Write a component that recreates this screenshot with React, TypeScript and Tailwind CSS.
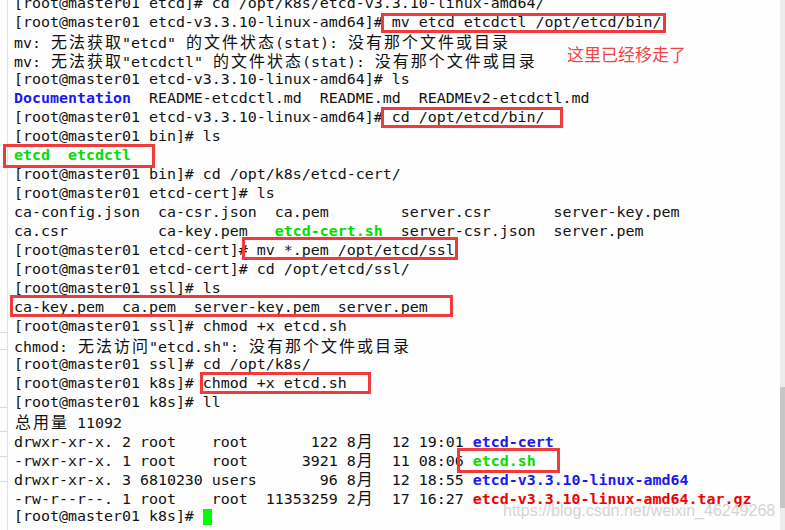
import React from "react";

type Seg = { t: string; c?: "blue" | "green" | "red" };
type Line = Seg[];

const P = (dir: string) => `[root@master01 ${dir}]# `;

const lines: Line[] = [
  [{ t: P("etcd") + "cd /opt/k8s/etcd-v3.3.10-linux-amd64/" }],
  [{ t: P("etcd-v3.3.10-linux-amd64") + "mv etcd etcdctl /opt/etcd/bin/" }],
  [{ t: 'mv: 无法获取"etcd" 的文件状态(stat): 没有那个文件或目录' }],
  [{ t: 'mv: 无法获取"etcdctl" 的文件状态(stat): 没有那个文件或目录' }],
  [{ t: P("etcd-v3.3.10-linux-amd64") + "ls" }],
  [{ t: "Documentation", c: "blue" }, { t: "  README-etcdctl.md  README.md  READMEv2-etcdctl.md" }],
  [{ t: P("etcd-v3.3.10-linux-amd64") + "cd /opt/etcd/bin/" }],
  [{ t: P("bin") + "ls" }],
  [{ t: "etcd", c: "green" }, { t: "  " }, { t: "etcdctl", c: "green" }],
  [{ t: P("bin") + "cd /opt/k8s/etcd-cert/" }],
  [{ t: P("etcd-cert") + "ls" }],
  [{ t: "ca-config.json  ca-csr.json  ca.pem        server.csr       server-key.pem" }],
  [
    { t: "ca.csr          ca-key.pem   " },
    { t: "etcd-cert.sh", c: "green" },
    { t: "  server-csr.json  server.pem" },
  ],
  [{ t: P("etcd-cert") + "mv *.pem /opt/etcd/ssl" }],
  [{ t: P("etcd-cert") + "cd /opt/etcd/ssl/" }],
  [{ t: P("ssl") + "ls" }],
  [{ t: "ca-key.pem  ca.pem  server-key.pem  server.pem" }],
  [{ t: P("ssl") + "chmod +x etcd.sh" }],
  [{ t: 'chmod: 无法访问"etcd.sh": 没有那个文件或目录' }],
  [{ t: P("ssl") + "cd /opt/k8s/" }],
  [{ t: P("k8s") + "chmod +x etcd.sh" }],
  [{ t: P("k8s") + "ll" }],
  [{ t: "总用量 11092" }],
  [{ t: "drwxr-xr-x. 2 root    root       122 8月  12 19:01 " }, { t: "etcd-cert", c: "blue" }],
  [{ t: "-rwxr-xr-x. 1 root    root      3921 8月  11 08:06 " }, { t: "etcd.sh", c: "green" }],
  [{ t: "drwxr-xr-x. 3 6810230 users       96 8月  12 18:55 " }, { t: "etcd-v3.3.10-linux-amd64", c: "blue" }],
  [{ t: "-rw-r--r--. 1 root    root  11353259 2月  17 16:27 " }, { t: "etcd-v3.3.10-linux-amd64.tar.gz", c: "red" }],
];

const cjkRe = /[\u3000-\u9fff\uff00-\uffef]/;

function renderText(s: string, keyBase: string) {
  const out: React.ReactNode[] = [];
  let buf = "";
  let i = 0;
  const flush = () => {
    if (buf) {
      out.push(<span key={keyBase + "a" + i}>{buf}</span>);
      buf = "";
    }
  };
  for (const ch of s) {
    i++;
    if (cjkRe.test(ch)) {
      flush();
      out.push(
        <span
          key={keyBase + "c" + i}
          className="inline-block w-[18px] text-center text-[16px] font-['Noto_Sans_CJK_SC',sans-serif] leading-[19px]"
        >
          {ch}
        </span>
      );
    } else {
      buf += ch;
    }
  }
  flush();
  return out;
}

const colorCls: Record<string, string> = {
  blue: "text-[#1a1af0] font-bold",
  green: "text-[#00e000] font-bold",
  red: "text-[#f00000] font-bold",
};

function Box({ l, t, w, h }: { l: number; t: number; w: number; h: number }) {
  return (
    <div
      className="absolute border-[3px] border-[#ef3b3b]"
      style={{ left: l, top: t, width: w, height: h }}
    />
  );
}

export default function App() {
  return (
    <div className="relative w-[785px] h-[530px] overflow-hidden bg-[#fefefe] flex">
      {/* left gutter */}
      <div className="w-[8px] h-full border-r border-[#e2e2e2] flex flex-col shrink-0">
        <div className="h-[333px] border-b border-[#d8d8d8]" />
        <div className="h-[17px] border-b border-[#d8d8d8]" />
        <div className="h-[58px] border-b border-[#d8d8d8]" />
        <div className="h-[24px] border-b border-[#d8d8d8]" />
        <div className="h-[25px] border-b border-[#d8d8d8]" />
        <div className="h-[25px] border-b border-[#d8d8d8]" />
      </div>
      {/* terminal text */}
      <div className="flex-1 pl-[6px] mt-[-6px] font-['DejaVu_Sans_Mono',monospace] text-[14.95px] text-[#111111]">
        {lines.map((ln, li) => (
          <div key={li} className="h-[19px] leading-[19px] whitespace-pre">
            {ln.map((sg, si) => (
              <span key={si} className={sg.c ? colorCls[sg.c] : ""}>
                {renderText(sg.t, `${li}-${si}-`)}
              </span>
            ))}
          </div>
        ))}
        <div className="h-[19px] leading-[19px] whitespace-pre flex items-center">
          <span>{P("k8s")}</span>
          <span className="inline-block w-[9px] h-[16px] bg-[#00ff00]" />
        </div>
      </div>
      {/* scrollbar */}
      <div className="w-[5px] h-full bg-[#ececec] flex flex-col shrink-0">
        <div className="h-[387px]" />
        <div className="h-[121px] bg-[#c6c6c6]" />
      </div>

      {/* annotation boxes */}
      <Box l={381} t={13} w={285} h={20} />
      <Box l={381} t={107} w={182} h={21} />
      <Box l={3} t={144} w={152} h={24} />
      <Box l={242} t={237} w={216} h={23} />
      <Box l={10} t={295} w={443} h={22} />
      <Box l={200} t={372} w={171} h={22} />
      <Box l={457} t={448} w={103} h={25} />

      {/* annotation text */}
      <div className="absolute left-[567px] top-[42px] text-[17px] leading-[24px] text-[#f04545] font-['Noto_Sans_CJK_SC',sans-serif]">
        这里已经移走了
      </div>

      {/* watermark */}
      <div className="absolute left-[503px] top-[501px] text-[16px] leading-[20px] text-[#d4d4d4] font-['Liberation_Sans',sans-serif] [text-shadow:0_0_1px_#ffffff]">
        https://blog.csdn.net/weixin_46249268
      </div>
    </div>
  );
}
